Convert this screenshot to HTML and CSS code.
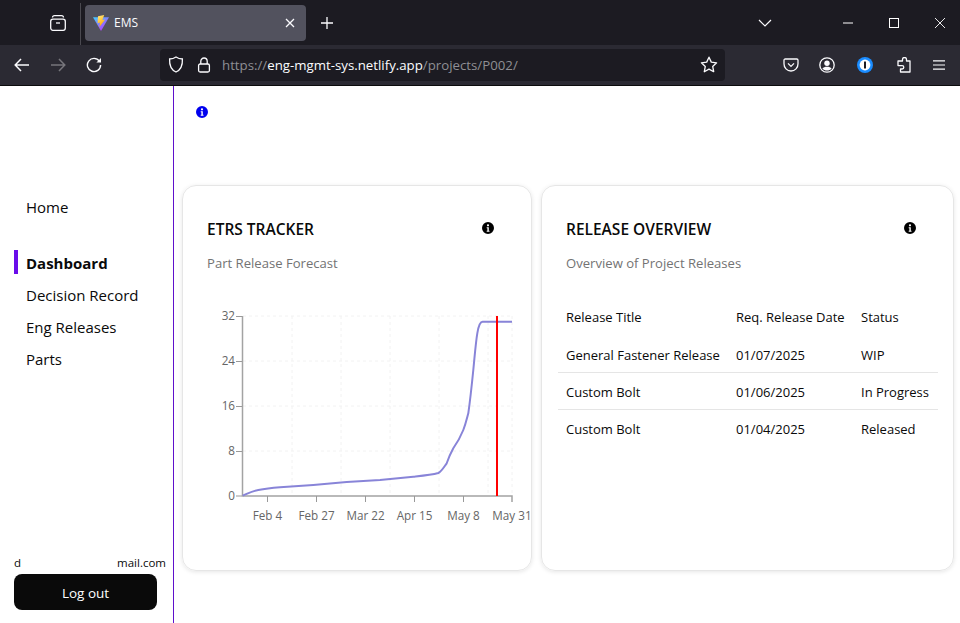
FILE: index.html
```html
<!DOCTYPE html>
<html lang="en">
<head>
    <meta charset="UTF-8">
    <meta name="viewport" content="width=device-width, initial-scale=1.0">
    <title>EMS</title>
    <link rel="stylesheet" href="styles.css">
</head>
<body>

    <!-- browser frame -->
    <div class="tabbar">
        <div class="tool tool-view">
            <svg width="18" height="18" viewBox="0 0 18 18" fill="none" stroke="#fbfbfe" stroke-width="1.3"><path d="M3.5 3.6c0-1.2.8-2 2-2h7c1.2 0 2 .8 2 2"/><rect x="1.7" y="5.2" width="14.6" height="11.1" rx="2.2"/><path d="M7 9h4"/></svg>
        </div>
        <div class="tab-sep"></div>
        <div class="tab">
            <svg class="favicon" width="16" height="16" viewBox="0 0 16 16">
                <defs>
                    <linearGradient id="viteA" x1="0" y1="0" x2="0.7" y2="1"><stop offset="0" stop-color="#41d1ff"/><stop offset="1" stop-color="#bd34fe"/></linearGradient>
                    <linearGradient id="viteB" x1="0" y1="0" x2="0.4" y2="1"><stop offset="0" stop-color="#ffea83"/><stop offset="1" stop-color="#ffa800"/></linearGradient>
                </defs>
                <path d="M0 2.2 L16 2.2 L8 16 Z" fill="url(#viteA)"/>
                <path d="M11.2 0 L5 1.2 L4.6 8.2 L7 7.6 L6.4 12 L12.2 4.6 L9.4 5 Z" fill="url(#viteB)"/>
            </svg>
            <span class="tab-title">EMS</span>
            <svg class="tab-close" width="10" height="10" viewBox="0 0 10 10" stroke="#fbfbfe" stroke-width="1.3"><path d="M1 1l8 8M9 1l-8 8"/></svg>
        </div>
        <div class="tool">
            <svg width="14" height="14" viewBox="0 0 14 14" stroke="#fbfbfe" stroke-width="1.3"><path d="M7 1v12M1 7h12"/></svg>
        </div>
        <div class="tool tool-tabs">
            <svg width="14" height="8" viewBox="0 0 14 8" fill="none" stroke="#fbfbfe" stroke-width="1.2"><path d="M1 1l6 6 6-6"/></svg>
        </div>
        <div class="win">
            <svg width="10" height="2" viewBox="0 0 10 2" stroke="#fff"><path d="M0 1h10"/></svg>
        </div>
        <div class="win">
            <svg width="10" height="10" viewBox="0 0 10 10" fill="none" stroke="#fff"><rect x=".5" y=".5" width="9" height="9"/></svg>
        </div>
        <div class="win win-close">
            <svg width="10" height="10" viewBox="0 0 10 10" stroke="#fff" stroke-width=".9"><path d="M0 0l10 10M10 0L0 10"/></svg>
        </div>
    </div>

    <div class="toolbar">
        <div class="tool">
            <svg width="16" height="14" viewBox="0 0 16 14" fill="none" stroke="#fbfbfe" stroke-width="1.5"><path d="M15 7H1.5M7 1L1.2 7 7 13"/></svg>
        </div>
        <div class="tool">
            <svg width="16" height="14" viewBox="0 0 16 14" fill="none" stroke="#77767c" stroke-width="1.5"><path d="M1 7h13.5M9 1l5.8 6L9 13"/></svg>
        </div>
        <div class="tool">
            <svg width="16" height="16" viewBox="0 0 16 16" fill="none" stroke="#fbfbfe" stroke-width="1.4"><path d="M13.4 4.2A6.6 6.6 0 1 0 14.6 8"/><path d="M15 1v4.6h-4.6z" fill="#fbfbfe" stroke="none"/></svg>
        </div>
        <div class="urlbar">
            <svg class="url-shield" width="16" height="17" viewBox="0 0 16 17" fill="none" stroke="#fbfbfe" stroke-width="1.3"><path d="M8 1c2 1.400 4.200 2 6.400 2 .3 6-1 10.600-6.400 13C2.600 13.600 1.300 9 1.600 3 3.800 3 6 2.400 8 1z"/></svg>
            <svg class="url-lock" width="14" height="16" viewBox="0 0 14 16" fill="none" stroke="#fbfbfe" stroke-width="1.3"><rect x="1.600" y="7" width="10.800" height="8" rx="1.500"/><path d="M3.800 7V4.200a3.200 3.200 0 0 1 6.400 0V7"/></svg>
            <span class="url-text"><span class="url-dim">https://</span>eng-mgmt-sys.netlify.app<span class="url-dim">/projects/P002/</span></span>
            <svg class="url-star" width="18" height="17" viewBox="0 0 18 17" fill="none" stroke="#fbfbfe" stroke-width="1.3" stroke-linejoin="round"><path d="M9 1.200l2.300 4.900 5.300.7-3.900 3.600 1 5.300L9 13.100l-4.700 2.600 1-5.300L1.400 6.800l5.300-.7z"/></svg>
        </div>
        <div class="tool tool-first">
            <svg width="16" height="14" viewBox="0 0 16 14" fill="none" stroke="#fbfbfe" stroke-width="1.300"><path d="M2.200 1h11.600c.7 0 1.200.5 1.200 1.200v3.600A7 7 0 0 1 8 13 7 7 0 0 1 1 5.800V2.200C1 1.500 1.500 1 2.200 1z"/><path d="M5 5.400l3 3 3-3"/></svg>
        </div>
        <div class="tool">
            <svg width="16" height="16" viewBox="0 0 16 16" fill="none"><circle cx="8" cy="8" r="7.200" stroke="#fbfbfe" stroke-width="1.300"/><circle cx="8" cy="6.200" r="2.700" fill="#fbfbfe"/><path d="M3.400 11.600c1-1.400 2.600-1.800 4.600-1.800s3.600.4 4.600 1.800C11.400 13 9.800 13.600 8 13.600s-3.400-.6-4.600-2z" fill="#fbfbfe"/></svg>
        </div>
        <div class="tool tool-pass">
            <svg width="16" height="16" viewBox="0 0 16 16"><circle cx="8" cy="8" r="8" fill="#1a8cff"/><circle cx="8" cy="8" r="5.400" fill="#fff"/><rect x="7" y="4.400" width="2" height="7.200" rx=".4" fill="#1c1b22"/></svg>
        </div>
        <div class="tool tool-ext">
            <svg width="14" height="16" viewBox="0 0 14 16" fill="none" stroke="#fbfbfe" stroke-width="1.300" stroke-linejoin="round"><path d="M5.500 3V2.500a2 2 0 0 1 4 0V4H13v11H3.500v-3h1.600a1.700 1.700 0 0 0 0-3.400H1V4h4.500z"/></svg>
        </div>
        <div class="tool tool-menu">
            <svg width="12" height="10" viewBox="0 0 12 10" stroke="#fbfbfe" stroke-width="1.200"><path d="M0 .8h12M0 5h12M0 9.200h12"/></svg>
        </div>
    </div>

    <!-- page -->
    <div class="app">
        <aside class="sidebar">
            <nav class="nav">
                <a class="nav-item nav-home">Home</a>
                <a class="nav-item active">Dashboard</a>
                <a class="nav-item">Decision Record</a>
                <a class="nav-item">Eng Releases</a>
                <a class="nav-item">Parts</a>
            </nav>
            <div class="user">
                <span>d</span>
                <span>mail.com</span>
            </div>
            <button class="logout">Log out</button>
        </aside>

        <main class="main">
            <div class="project-info">
                <svg class="info-icon info-blue" viewBox="0 0 12 12"><use href="#info"/></svg>
            </div>

            <div class="cards">
                <section class="card card-chart">
                    <div class="card-head">
                        <h2>ETRS TRACKER</h2>
                        <svg class="info-icon" viewBox="0 0 12 12"><use href="#info"/></svg>
                    </div>
                    <p class="card-sub">Part Release Forecast</p>

                    <svg class="chart" width="324" height="250" viewBox="208 300 324 250">
                        <g class="grid">
                            <path d="M243 316H512M243 361H512M243 406H512M243 451H512"/>
                            <path d="M292 316V496M341 316V496M390 316V496M439 316V496M488 316V496M512 316V496"/>
                        </g>
                        <g class="axis">
                            <path class="axis-line" d="M242.500 316V496H512V502"/>
                            <path d="M236 316.500H242M236 361.500H242M236 406.500H242M236 451.500H242M236 496H242"/>
                            <path d="M267.500 496V502M316.500 496V502M365.500 496V502M414.500 496V502M463.500 496V502"/>
                        </g>
                        <g class="ticks-y">
                            <text x="235" y="320">32</text>
                            <text x="235" y="365">24</text>
                            <text x="235" y="410">16</text>
                            <text x="235" y="455">8</text>
                            <text x="235" y="500">0</text>
                        </g>
                        <g class="ticks-x">
                            <text x="267.500" y="520">Feb 4</text>
                            <text x="316.500" y="520">Feb 27</text>
                            <text x="365.500" y="520">Mar 22</text>
                            <text x="414.500" y="520">Apr 15</text>
                            <text x="463.500" y="520">May 8</text>
                            <text x="512" y="520">May 31</text>
                        </g>
                        <path class="line" d="M242.700 495.700C248 493.500 252 491 258.300 490C265 488.800 272 488 280 487.300L313.300 485L346.700 482L380 480L413.300 476.700C422 475.800 431 475 438.300 473C441.500 471.500 444 467 446.700 463.300C448.500 458 451 452.500 453.300 448.300C457 443 460.500 437 463.300 430C466 423 467.200 417 468.300 413.300C470.500 398 471.800 385 473.300 370C474.800 355 475.800 342 477.300 333.300C478.500 326 479.800 321.700 482.500 321.700H512"/>
                        <path class="today" d="M497 316V496"/>
                    </svg>
                </section>

                <section class="card card-table">
                    <div class="card-head">
                        <h2>RELEASE OVERVIEW</h2>
                        <svg class="info-icon" viewBox="0 0 12 12"><use href="#info"/></svg>
                    </div>
                    <p class="card-sub">Overview of Project Releases</p>

                    <table class="releases">
                        <thead>
                            <tr>
                                <th>Release Title</th>
                                <th>Req. Release Date</th>
                                <th>Status</th>
                            </tr>
                        </thead>
                        <tbody>
                            <tr>
                                <td>General Fastener Release</td>
                                <td>01/07/2025</td>
                                <td>WIP</td>
                            </tr>
                            <tr>
                                <td>Custom Bolt</td>
                                <td>01/06/2025</td>
                                <td>In Progress</td>
                            </tr>
                            <tr>
                                <td>Custom Bolt</td>
                                <td>01/04/2025</td>
                                <td>Released</td>
                            </tr>
                        </tbody>
                    </table>
                </section>
            </div>
        </main>
    </div>

    <!-- shared info glyph -->
    <svg class="defs" width="0" height="0">
        <symbol id="info" viewBox="0 0 12 12">
            <path fill-rule="evenodd" d="M6 0a6 6 0 1 1 0 12A6 6 0 0 1 6 0zM6 2.200a1.100 1.100 0 1 0 0 2.200 1.100 1.100 0 0 0 0-2.200zM4.700 5.200v1h.7v2.500h-.7v1h2.800v-1h-.7V5.200z"/>
        </symbol>
    </svg>

</body>
</html>
```

FILE: styles.css
```css
* {
    box-sizing: border-box;
}

html, body {
    margin: 0;
    height: 100%;
}

body {
    overflow: hidden;
    background-color: #fff;
    color: #0a0a0a;
    font-family: "Open Sans", "Noto Sans", sans-serif;
}

/* browser frame */
.tabbar {
    display: flex;
    align-items: center;
    height: 45px;
    background-color: #1c1b22;
    overflow: hidden;
}

.tool {
    display: flex;
    align-items: center;
    justify-content: center;
    flex: none;
    width: 36px;
    height: 36px;
}

.tool-view {
    margin-left: 40px;
}

.tool-tabs {
    margin-left: auto;
    margin-right: 42px;
}

.tool-first {
    margin-left: 48px;
}

.tool-pass {
    width: 40px;
}

.tool-ext {
    width: 38px;
}

.tool-menu {
    width: 32px;
}

.tab-sep {
    align-self: stretch;
    width: 1px;
    margin: 3px 4px 0 4px;
    background-color: #4a4950;
}

.tab {
    display: flex;
    align-items: center;
    width: 221px;
    height: 36px;
    margin-right: 3px;
    padding: 0 11px 0 8px;
    border-radius: 4px;
    background-color: #52525e;
    color: #fbfbfe;
}

.tab-title {
    flex: 1;
    margin-left: 5px;
    font-size: 12px;
}

.win {
    display: flex;
    align-items: center;
    justify-content: center;
    flex: none;
    width: 46px;
    height: 45px;
}

.win-close {
    margin-right: -3px;
}

.toolbar {
    display: flex;
    align-items: center;
    height: 41px;
    padding: 0 0 1px 4px;
    border-bottom: 1px solid #0c0c0d;
    background-color: #2b2a33;
}

.urlbar {
    display: flex;
    align-items: center;
    flex: none;
    width: 565px;
    height: 32px;
    margin-left: 48px;
    padding: 0 7px 0 8px;
    border-radius: 4px;
    background-color: #1c1b22;
    color: #fbfbfe;
    font-size: 13.25px;
}

.url-lock {
    margin-left: 13px;
}

.url-text {
    flex: 1;
    margin-left: 11px;
}

.url-dim {
    color: #8f8f94;
}

/* page */
.app {
    display: flex;
    height: calc(100% - 86px);
}

.sidebar {
    display: flex;
    flex-direction: column;
    flex: none;
    width: 174px;
    padding: 105px 7px 13px 14px;
    border-right: 1px solid #5f10cc;
}

.nav {
    flex: 1;
}

.nav-item {
    display: block;
    height: 32px;
    padding-left: 12px;
    font-size: 15px;
    line-height: 32px;
}

.nav-home {
    margin-bottom: 24px;
}

.active {
    font-weight: 700;
    position: relative;
}

.active::before {
    content: "";
    position: absolute;
    left: 0;
    top: 3px;
    width: 4px;
    height: 24px;
    background-color: #6a0dea;
}

.user {
    display: flex;
    justify-content: space-between;
    margin-bottom: 3px;
    font-size: 11.5px;
    line-height: 16px;
}

.logout {
    width: 143px;
    height: 36px;
    padding: 1px 0 0;
    border: 0;
    border-radius: 8px;
    background-color: #0a0a0a;
    color: #fff;
    font-family: inherit;
    font-size: 13.5px;
}

.main {
    flex: 1;
    padding: 0 5px 0 8px;
}

.project-info {
    display: flex;
    align-items: center;
    height: 99px;
    padding: 0 0 46px 14px;
}

.info-icon {
    display: block;
    flex: none;
    width: 12px;
    height: 12px;
    margin-bottom: 2px;
    fill: #000;
}

.info-blue {
    fill: #0000ee;
}

.cards {
    display: flex;
    gap: 9px;
}

.card {
    height: 386px;
    border: 1px solid #e6e6e6;
    border-radius: 14px;
    box-shadow: 0 1px 4px rgba(0, 0, 0, 0.1);
}

.card-chart {
    width: 350px;
}

.card-table {
    width: 413px;
}

.card-head {
    display: flex;
    align-items: center;
    justify-content: space-between;
    padding: 34px 37px 0 24px;
}

.card-head h2 {
    margin: 0;
    font-size: 15.5px;
    font-weight: 600;
    line-height: 18px;
}

.card-sub {
    margin: 16px 0 0 24px;
    color: #737373;
    font-size: 13.1px;
    line-height: 18px;
}

/* chart */
.chart {
    display: block;
    margin: 28px 0 0 25px;
}

.grid path {
    fill: none;
    stroke: #f2f2f2;
    stroke-dasharray: 3 3;
}

.axis path {
    fill: none;
    stroke: #999;
}

.axis .axis-line {
    stroke: #a3a3a3;
    stroke-width: 1.5;
}

.ticks-y text,
.ticks-x text {
    fill: #666;
    font-size: 11.7px;
}

.ticks-y text {
    text-anchor: end;
}

.ticks-x text {
    text-anchor: middle;
}

.line {
    fill: none;
    stroke: #8884d8;
    stroke-width: 2;
}

.today {
    fill: none;
    stroke: #f00;
    stroke-width: 2;
}

/* release table */
.releases {
    width: 380px;
    margin: 26px 0 0 16px;
    border-collapse: collapse;
    table-layout: fixed;
    font-size: 13px;
}

.releases th,
.releases td {
    height: 37px;
    padding: 0 8px;
    text-align: left;
    font-weight: 400;
    white-space: nowrap;
}

.releases td {
    padding-top: 2px;
}

.releases tbody tr:first-child td {
    padding-top: 4px;
}

.releases th:nth-child(1) {
    width: 170px;
}

.releases th:nth-child(2) {
    width: 125px;
}

.releases tbody tr:not(:last-child) td {
    border-bottom: 1px solid #e5e5e5;
}

.defs {
    position: absolute;
}
```
